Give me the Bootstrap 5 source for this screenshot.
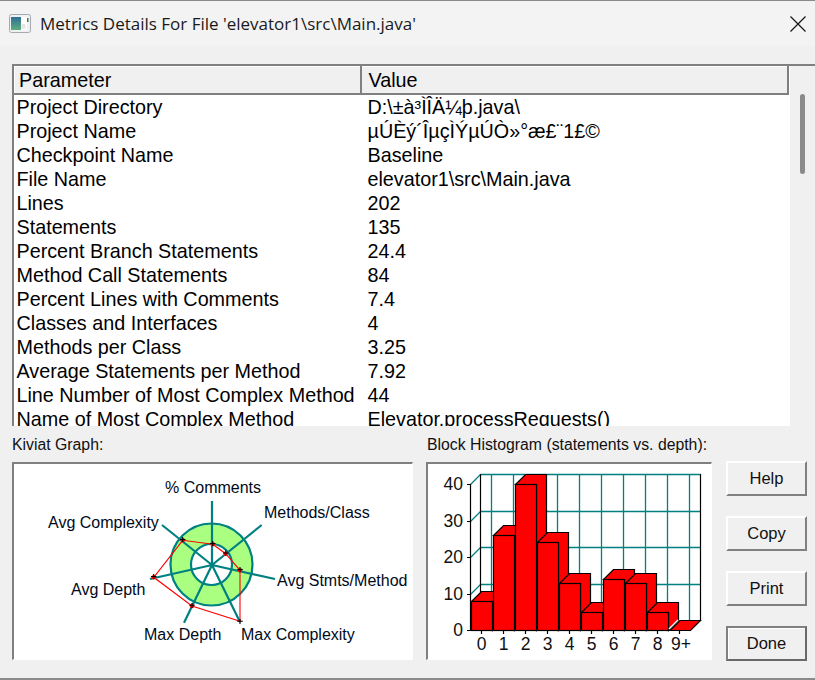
<!DOCTYPE html>
<html lang="en">
<head>
<meta charset="utf-8">
<title>Metrics Details</title>
<link rel="stylesheet" href="https://cdn.jsdelivr.net/npm/bootstrap@5.3.0/dist/css/bootstrap.min.css">
<style>
html,body{margin:0;height:680px;overflow:hidden;background:#f0f0f0}
.win{width:815px;height:680px;background:#f0f0f0;font-family:"Liberation Sans",Arial,sans-serif;color:#000}
.titlebar{height:46px;background:#f3f3f3;border-top:1px solid #8a8a8a;padding-left:9px;font-family:"Open Sans","Noto Sans",sans-serif;font-size:17px;color:#1a1a1a}
.titletxt{margin-left:9px;white-space:nowrap}
.closex{margin-left:auto;margin-right:9px}
.listwrap{margin:18px 0 0 12px;height:362px;border-top:2px solid #808080;border-left:2px solid #808080;background:#fff}
.listmain{width:776px;height:100%;overflow:hidden}
.sbar{width:25px;background:#f0f0f0;padding:28px 0 0 10px}
.sthumb{width:5px;height:80px;border-radius:3px;background:#8b8b8b}
.mtab{width:775px;table-layout:fixed;font-size:19.75px;line-height:24px;margin:0}
.mtab th{font-weight:400;background:#f0f0f0;height:27px;padding:0 0 0 4px;border-right:2px solid #808080;border-bottom:2px solid #808080;border-top:1px solid #fff;border-left:1px solid #fff;line-height:24px}
.mtab td{padding:0 0 0 2px;height:24px;white-space:nowrap;background:#fff}
.mtab td+td{padding-left:7px}
.mtab thead th+th{padding-left:7px}
.c1{width:346px}
.lower{padding:9px 8px 0 12px}
.lbl{font-size:15.8px;line-height:20px;height:27px;white-space:nowrap;color:#111}
.hcol .lbl{padding-left:1px}
.panel{height:198px;background:#fff;border-top:2px solid #808080;border-left:2px solid #808080;border-right:1px solid #fff;border-bottom:1px solid #fff;display:block;overflow:hidden}
.pk{width:401px}
.ph{width:286px}
.kcol{margin-right:13px}
.hcol{margin-right:14px}
.pk svg,.ph svg{display:block}
.pk text{font-size:16px;fill:#000a1a}
.ph text{font-size:17.5px;fill:#111}
.btncol{width:81px;padding-top:26px;gap:20px}
.wbtn{height:35px;width:81px;padding:0;border-radius:0;font-size:16.5px;color:#111;background:#f0f0f0;border:2px solid;border-color:#fff #808080 #808080 #fff;font-family:inherit}
.wbtn.dflt{border:2px solid;border-color:#808080 #696969 #696969 #808080;box-shadow:inset 1px 1px 0 #fff}
.bottomline{height:2px;background:#8a8a8a;margin-top:17px}
</style>
</head>
<body>
<div class="win d-flex flex-column">
  <div class="titlebar d-flex align-items-center">
    <svg width="22" height="19" viewBox="0 0 22 19" aria-hidden="true">
      <defs><linearGradient id="ig" x1="0" y1="0" x2="0" y2="1"><stop offset="0" stop-color="#2c6f96"/><stop offset="1" stop-color="#5fae7c"/></linearGradient></defs>
      <rect x=".5" y=".5" width="21" height="18" rx="2" fill="#eef0f2" stroke="#a4aab0"/>
      <rect x="2" y="3" width="10" height="13" fill="url(#ig)"/>
      <rect x="12" y="3" width="6" height="13" fill="#fff"/>
      <rect x="12.500" y="10" width="4" height="5" fill="#e4e6e4"/>
      <rect x="18" y="4" width="1.500" height="4" fill="#3d7a55"/>
    </svg>
    <span class="titletxt">Metrics Details For File 'elevator1\src\Main.java'</span>
    <svg class="closex" width="16" height="16" viewBox="0 0 16 16" aria-hidden="true"><path d="M.5.500 15.500 15.500M15.500.500.500 15.500" stroke="#1a1a1a" stroke-width="1.300" fill="none"/></svg>
  </div>
  <div class="listwrap d-flex">
    <div class="listmain">
      <table class="mtab">
        <thead><tr><th class="c1">Parameter</th><th>Value</th></tr></thead>
        <tbody>
          <tr><td>Project Directory</td><td>D:\±à³ÌÎÄ¼þ.java\</td></tr>
          <tr><td>Project Name</td><td>µÚÈý´ÎµçÌÝµÚÒ»°æ£¨1£©</td></tr>
          <tr><td>Checkpoint Name</td><td>Baseline</td></tr>
          <tr><td>File Name</td><td>elevator1\src\Main.java</td></tr>
          <tr><td>Lines</td><td>202</td></tr>
          <tr><td>Statements</td><td>135</td></tr>
          <tr><td>Percent Branch Statements</td><td>24.4</td></tr>
          <tr><td>Method Call Statements</td><td>84</td></tr>
          <tr><td>Percent Lines with Comments</td><td>7.4</td></tr>
          <tr><td>Classes and Interfaces</td><td>4</td></tr>
          <tr><td>Methods per Class</td><td>3.25</td></tr>
          <tr><td>Average Statements per Method</td><td>7.92</td></tr>
          <tr><td>Line Number of Most Complex Method</td><td>44</td></tr>
          <tr><td>Name of Most Complex Method</td><td>Elevator.processRequests()</td></tr>
        </tbody>
      </table>
    </div>
    <div class="sbar"><div class="sthumb"></div></div>
  </div>
  <div class="lower d-flex">
    <div class="kcol">
      <div class="lbl">Kiviat Graph:</div>
      <div class="panel pk">
        <svg width="398" height="195" viewBox="14 464 398 195">
          <circle cx="211.500" cy="564.500" r="41" fill="#aaff80" stroke="#008080" stroke-width="2.200"/>
          <circle cx="211.500" cy="564.500" r="20.500" fill="#fff" stroke="#008080" stroke-width="2.200"/>
          <g stroke="#008080" stroke-width="2.200" fill="none">
            <path d="M212 565V501M212 565 261.700 525M212 565 275 579M212 565 240 622M212 565 184 622.700M212 565 150 579M212 565 162 525"/>
          </g>
          <polygon points="212.700,544.300 225.700,553.700 240,570.300 240,621.300 192,606 153.700,577.300 182.700,540.300" fill="none" stroke="#f00" stroke-width="1.100"/>
          <g fill="#f00">
            <circle cx="212.700" cy="544.300" r="2.200"/><circle cx="225.700" cy="553.700" r="2.200"/><circle cx="240" cy="570.300" r="2.200"/><circle cx="192" cy="606" r="2.200"/><circle cx="153.700" cy="577.300" r="2.200"/><circle cx="182.700" cy="540.300" r="2.200"/>
          </g>
          <path d="M210 543.500h5.500M212.700 541v5M223 553h5.500M225.700 550.500v5M237.300 569.500h5.500M240 567v5M237.300 621.300h5.500M240 619v5M189.300 605.300h5.500M192 603v5M151 576.500h5.500M153.700 574v5M180 539.500h5.500M182.700 537v5" stroke="#000" stroke-width="1.100" fill="none"/>
          <text x="165" y="492.500">% Comments</text>
          <text x="264" y="517.500">Methods/Class</text>
          <text x="277" y="585.500">Avg Stmts/Method</text>
          <text x="241" y="639.500">Max Complexity</text>
          <text x="144" y="639.500">Max Depth</text>
          <text x="71" y="594.500">Avg Depth</text>
          <text x="48" y="527.500">Avg Complexity</text>
        </svg>
      </div>
    </div>
    <div class="hcol">
      <div class="lbl">Block Histogram (statements vs. depth):</div>
      <div class="panel ph">
        <svg id="hist" width="283" height="195" viewBox="428 464 283 195">
          <g stroke="#008080" stroke-width="1.300" fill="none">
            <path d="M480.500 474.500H700.500M480.500 511.500H700.500M480.500 547.500H700.500M480.500 584.500H700.500"/>
            <path d="M491.500 474.500V620M513.500 474.500V620M535.500 474.500V620M557.500 474.500V620M579.500 474.500V620M601.500 474.500V620M623.500 474.500V620M645.500 474.500V620M667.500 474.500V620M689.500 474.500V620"/>
            <path d="M470.500 484.500 480.500 474.500M470.500 521.500 480.500 511.500M470.500 557.500 480.500 547.500M470.500 594.500 480.500 584.500"/>
          </g>
          <path d="M480.500 474V620M700.500 474V620M470.500 484V630M467 484.500H470.500M467 521.500H470.500M467 557.500H470.500M467 594.500H470.500M467 630.500H690M481.500 630V634M503.500 630V634M525.500 630V634M547.500 630V634M569.500 630V634M591.500 630V634M613.500 630V634M635.500 630V634M657.500 630V634M679.500 630V634" stroke="#000" stroke-width="1.200" fill="none"/>
          <g stroke="#000" stroke-width="1.200" fill="#f00" stroke-linejoin="miter">
            <path d="M471.500 601.500 481.500 591.500H502.500V620.500L492.500 630.500V601.500Z"/><rect x="471.500" y="601.500" width="21" height="29"/>
            <path d="M493.500 535.500 503.500 525.500H524.500V620.500L514.500 630.500V535.500Z"/><rect x="493.500" y="535.500" width="21" height="95"/>
            <path d="M515.500 484.500 525.500 474.500H546.500V620.500L536.500 630.500V484.500Z"/><rect x="515.500" y="484.500" width="21" height="146"/>
            <path d="M537.500 542.500 547.500 532.500H568.500V620.500L558.500 630.500V542.500Z"/><rect x="537.500" y="542.500" width="21" height="88"/>
            <path d="M559.500 583.500 569.500 573.500H590.500V620.500L580.500 630.500V583.500Z"/><rect x="559.500" y="583.500" width="21" height="47"/>
            <path d="M581.500 612.500 591.500 602.500H612.500V620.500L602.500 630.500V612.500Z"/><rect x="581.500" y="612.500" width="21" height="18"/>
            <path d="M603.500 579.500 613.500 569.500H634.500V620.500L624.500 630.500V579.500Z"/><rect x="603.500" y="579.500" width="21" height="51"/>
            <path d="M625.500 583.500 635.500 573.500H656.500V620.500L646.500 630.500V583.500Z"/><rect x="625.500" y="583.500" width="21" height="47"/>
            <path d="M647.500 612.500 657.500 602.500H678.500V620.500L668.500 630.500V612.500Z"/><rect x="647.500" y="612.500" width="21" height="18"/>
            <path d="M670 630.500 680 620.500H700.500L690.500 630.500Z"/>
          </g>
          <path d="M669 629 678 620" stroke="#fff" stroke-width="1.500"/>
          <g text-anchor="end">
            <text x="463" y="490">40</text><text x="463" y="527">30</text><text x="463" y="563">20</text><text x="463" y="600">10</text><text x="463" y="636">0</text>
          </g>
          <g text-anchor="middle">
            <text x="481.500" y="650">0</text><text x="503.500" y="650">1</text><text x="525.500" y="650">2</text><text x="547.500" y="650">3</text><text x="569.500" y="650">4</text><text x="591.500" y="650">5</text><text x="613.500" y="650">6</text><text x="635.500" y="650">7</text><text x="657.500" y="650">8</text><text x="681" y="650">9+</text>
          </g>
        </svg>
      </div>
    </div>
    <div class="btncol d-flex flex-column">
      <button type="button" class="btn wbtn">Help</button>
      <button type="button" class="btn wbtn">Copy</button>
      <button type="button" class="btn wbtn">Print</button>
      <button type="button" class="btn wbtn dflt">Done</button>
    </div>
  </div>
  <div class="bottomline"></div>
</div>
<script src="https://cdn.jsdelivr.net/npm/bootstrap@5.3.0/dist/js/bootstrap.bundle.min.js"></script>
</body>
</html>
